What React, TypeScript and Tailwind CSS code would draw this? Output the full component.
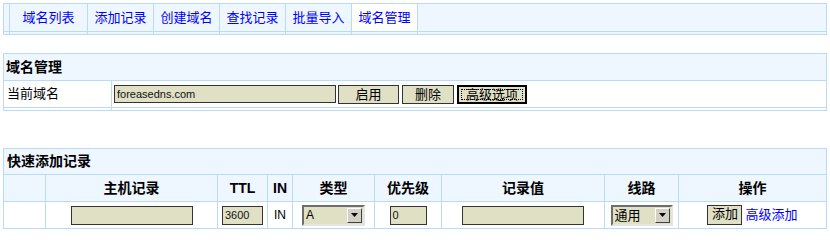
const FONT = "font-['Liberation_Sans','Noto_Sans_CJK_SC',sans-serif]";

const navItems = ["域名列表", "添加记录", "创建域名", "查找记录", "批量导入", "域名管理"];

function KhakiInput({ value = "", className = "" }: { value?: string; className?: string }) {
  return (
    <div
      className={`flex h-[18px] items-center border border-[#333] bg-[#e0e0c5] px-[2px] text-[11px] leading-none text-[#111] ${className}`}
    >
      {value}
    </div>
  );
}

function KhakiButton({ label, className = "" }: { label: string; className?: string }) {
  return (
    <div
      className={`flex h-[19px] items-center justify-center border border-[#333] bg-[#e0e0c5] text-[13px] leading-none text-black ${className}`}
    >
      {label}
    </div>
  );
}

function FakeSelect({ value, className = "" }: { value: string; className?: string }) {
  return (
    <div
      className={`flex h-[21px] border-2 border-t-[#6e6e6e] border-l-[#6e6e6e] border-b-[#e4e4e4] border-r-[#e4e4e4] bg-[#e0e0c5] ${className}`}
    >
      <div className="flex flex-1 items-center pl-[2px] text-[12px] leading-none text-black">{value}</div>
      <div className="my-px mr-px flex w-[15px] items-center justify-center border border-t-white border-l-white border-b-[#404040] border-r-[#404040] bg-[#d4d0c8]">
        <svg width="7" height="4" viewBox="0 0 7 4">
          <path d="M0 0H7L3.5 4Z" fill="#000" />
        </svg>
      </div>
    </div>
  );
}

export default function App() {
  return (
    <div className={`${FONT} bg-white px-[3px] pt-[3px] pb-[4px] text-black`}>
      {/* top nav */}
      <div className="grid grid-cols-[5px_77px_65px_65px_65px_65px_65px_1fr] grid-rows-[27px_2px] gap-px bg-[#b9dbf7] p-px">
        <div className="bg-[#eef7ff]" />
        {navItems.map((t, i) => (
          <div
            key={t}
            className={`flex items-center justify-center text-[13px] text-[#0000ff] ${
              i === navItems.length - 1 ? "bg-white" : "bg-[#eef7ff]"
            }`}
          >
            {t}
          </div>
        ))}
        <div className="bg-[#eef7ff]" />
        {Array.from({ length: 8 }).map((_, i) => (
          <div key={i} className="bg-[#eef7ff]" />
        ))}
      </div>

      {/* domain management */}
      <div className="mt-[18px] grid grid-cols-[107px_1fr] grid-rows-[26px_26px_2px] gap-px bg-[#b9dbf7] p-px">
        <div className="col-span-2 flex items-center bg-[#eef7ff] pl-[2px] text-[14px] font-bold">域名管理</div>
        <div className="flex items-center bg-white pl-[3px] text-[13px]">当前域名</div>
        <div className="flex items-center gap-[3px] bg-white pl-[2px]">
          <KhakiInput value="foreasedns.com" className="w-[222px]" />
          <KhakiButton label="启用" className="-ml-px w-[61px]" />
          <KhakiButton label="删除" className="w-[52px]" />
          <div className="flex h-[19px] w-[70px] items-center justify-center border-2 border-black bg-[#e0e0c5] p-[2px]">
            <div className="flex h-full w-full items-center justify-center border border-dotted border-black text-[13px] leading-none">
              高级选项
            </div>
          </div>
        </div>
        <div className="bg-white" />
        <div className="bg-white" />
      </div>

      {/* quick add */}
      <div className="mt-[37px] grid grid-cols-[41px_171px_49px_24px_81px_66px_162px_73px_1fr] grid-rows-[25px_26px_26px] gap-px bg-[#b9dbf7] p-px">
        <div className="col-span-full flex items-center bg-[#eef7ff] pl-[3px] text-[14px] font-bold">快速添加记录</div>
        {["", "主机记录", "TTL", "IN", "类型", "优先级", "记录值", "线路", "操作"].map((h, i) => (
          <div key={i} className="flex items-center justify-center bg-[#eef7ff] text-[14px] font-bold">
            {h}
          </div>
        ))}
        <div className="bg-white" />
        <div className="flex items-center justify-center bg-white">
          <KhakiInput className="h-[19px] w-[122px]" />
        </div>
        <div className="flex items-center justify-center bg-white">
          <KhakiInput value="3600" className="h-[19px] w-[41px]" />
        </div>
        <div className="flex items-center justify-center bg-white text-[12px]">IN</div>
        <div className="flex items-center justify-center bg-white">
          <FakeSelect value="A" className="w-[63px]" />
        </div>
        <div className="flex items-center justify-center bg-white">
          <KhakiInput value="0" className="h-[19px] w-[37px]" />
        </div>
        <div className="flex items-center justify-center bg-white">
          <KhakiInput className="h-[19px] w-[122px]" />
        </div>
        <div className="flex items-center justify-center bg-white">
          <FakeSelect value="通用" className="w-[62px] [&>div:first-child]:text-[13px]" />
        </div>
        <div className="flex items-center justify-center gap-[3px] bg-white">
          <div className="flex h-[20px] w-[35px] items-start justify-center border border-[#333] bg-[#e0e0c5] pt-[1px] text-[13px] leading-none">
            添加
          </div>
          <span className="text-[13px] text-[#0000ff]">高级添加</span>
        </div>
      </div>
    </div>
  );
}
